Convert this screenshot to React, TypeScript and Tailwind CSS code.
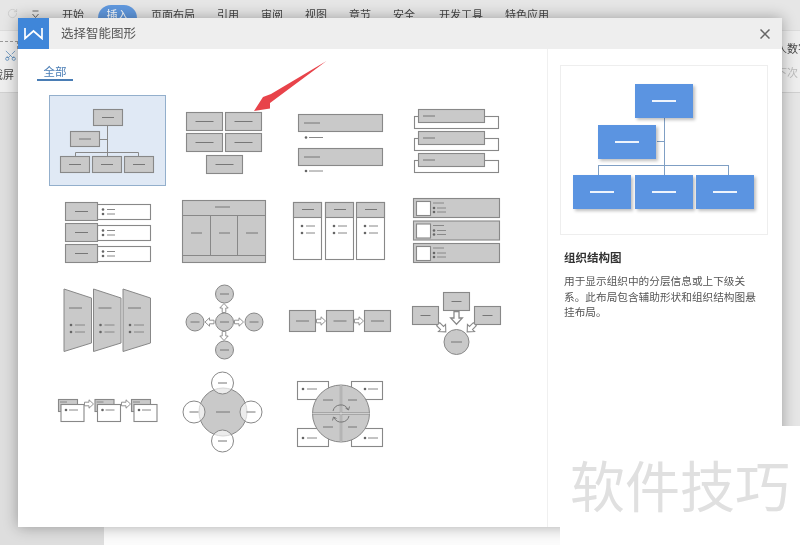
import React from "react";
import { RotateCw, Scissors } from "lucide-react";

const F = "#c9c9c9";
const S = "#888888";

const Dash = ({ a, b, y, c = "#777777" }: { a: number; b: number; y: number; c?: string }) => (
  <line x1={a} x2={b} y1={y} y2={y} stroke={c} strokeWidth={1} />
);
const Rect = ({ x, y, w, h, f = F }: { x: number; y: number; w: number; h: number; f?: string }) => (
  <rect x={x + 0.5} y={y + 0.5} width={w - 1} height={h - 1} fill={f} stroke={S} strokeWidth={1.1} />
);
const Box = ({ x, y, w, h, d = 12 }: { x: number; y: number; w: number; h: number; d?: number }) => (
  <g>
    <Rect x={x} y={y} w={w} h={h} />
    <Dash a={x + w / 2 - d / 2} b={x + w / 2 + d / 2} y={y + h / 2} />
  </g>
);
const Bullet = ({ x, y, a, b }: { x: number; y: number; a: number; b: number }) => (
  <g>
    <circle cx={x} cy={y} r={1.3} fill="#666" />
    <Dash a={a} b={b} y={y} c="#888" />
  </g>
);
const Circle = ({ x, y, r, f = F, o = 1, d = 9 }: { x: number; y: number; r: number; f?: string; o?: number; d?: number }) => (
  <g>
    <circle cx={x} cy={y} r={r} fill={f} fillOpacity={o} stroke={S} strokeWidth={1} />
    <Dash a={x - d / 2} b={x + d / 2} y={y} />
  </g>
);
const Arrow = ({ x, y, r = 0, s = 1 }: { x: number; y: number; r?: number; s?: number }) => (
  <polygon
    points="-4.5,-1.8 0,-1.8 0,-4.2 4.5,0 0,4.2 0,1.8 -4.5,1.8"
    transform={`translate(${x} ${y}) rotate(${r}) scale(${s})`}
    fill="#fff"
    stroke={S}
    strokeWidth={0.9}
  />
);

const cells: React.ReactNode[] = [
  // row 1
  <g key="a">
    <path d="M107.5 126V156M75.5 156V152.5H138.5V156M100 139.5H107.5" fill="none" stroke={S} strokeWidth={1} />
    <Box x={93} y={109} w={30} h={17} />
    <Box x={70} y={131} w={30} h={16} />
    <Box x={60} y={156} w={30} h={17} />
    <Box x={92} y={156} w={30} h={17} />
    <Box x={124} y={156} w={30} h={17} />
  </g>,
  <g key="b">
    <Box x={186} y={112} w={37} h={19} d={18} />
    <Box x={225} y={112} w={37} h={19} d={18} />
    <Box x={186} y={133} w={37} h={19} d={18} />
    <Box x={225} y={133} w={37} h={19} d={18} />
    <Box x={206} y={155} w={37} h={19} d={18} />
  </g>,
  <g key="c">
    <Rect x={298} y={114} w={85} h={18} />
    <Dash a={304} b={320} y={123} />
    <Bullet x={306} y={137.5} a={309} b={323} />
    <Rect x={298} y={148} w={85} h={18} />
    <Dash a={304} b={320} y={157} />
    <Bullet x={306} y={171} a={309} b={323} />
  </g>,
  <g key="d">
    {[0, 22, 44].map((o) => (
      <g key={o}>
        <Rect x={414} y={116 + o} w={85} h={13} f="#fff" />
        <Rect x={418} y={109 + o} w={67} h={14} />
        <Dash a={423} b={435} y={116 + o} />
      </g>
    ))}
  </g>,
  // row 2
  <g key="e">
    {[0, 21, 42].map((o) => (
      <g key={o}>
        <Rect x={97} y={204 + o} w={54} h={16} f="#fff" />
        <Box x={65} y={202 + o} w={33} h={19} d={13} />
        <Bullet x={103} y={209.5 + o} a={107} b={115} />
        <Bullet x={103} y={214 + o} a={107} b={115} />
      </g>
    ))}
  </g>,
  <g key="f">
    <Rect x={182} y={200} w={84} h={63} />
    <path d="M182.5 215.5H265.5M182.5 255.5H265.5M210.5 215.5V255.5M237.5 215.5V255.5" stroke={S} fill="none" />
    <Dash a={215} b={230} y={207} />
    <Dash a={191} b={202} y={233} />
    <Dash a={219} b={230} y={233} />
    <Dash a={246} b={258} y={233} />
  </g>,
  <g key="g">
    {[293, 325, 356].map((x) => (
      <g key={x}>
        <Rect x={x} y={202} w={29} h={58} f="#fff" />
        <Rect x={x} y={202} w={29} h={16} />
        <Dash a={x + 9} b={x + 21} y={209.5} />
        <Bullet x={x + 9} y={226} a={x + 13} b={x + 22} />
        <Bullet x={x + 9} y={233} a={x + 13} b={x + 22} />
      </g>
    ))}
  </g>,
  <g key="h">
    {[0, 22.5, 45].map((o) => (
      <g key={o}>
        <Rect x={413} y={198 + o} w={87} h={20} />
        <Rect x={416} y={201 + o} w={15} h={15} f="#fff" />
        <Dash a={433} b={444} y={203 + o} c="#888" />
        <Bullet x={434} y={208 + o} a={437} b={446} />
        <Bullet x={434} y={212 + o} a={437} b={446} />
      </g>
    ))}
  </g>,
  // row 3
  <g key="i">
    {[64, 93.5, 123].map((x) => (
      <g key={x}>
        <polygon points={`${x},289 ${x + 27.5},298 ${x + 27.5},343 ${x},351.5`} fill={F} stroke={S} />
        <Dash a={x + 5} b={x + 18} y={308} />
        <Bullet x={x + 7} y={325} a={x + 11} b={x + 21} />
        <Bullet x={x + 7} y={332} a={x + 11} b={x + 21} />
      </g>
    ))}
  </g>,
  <g key="j">
    <Circle x={224.5} y={294} r={9} />
    <Circle x={224.5} y={350} r={9} />
    <Circle x={195} y={322} r={9} />
    <Circle x={254} y={322} r={9} />
    <Circle x={224.5} y={322} r={9} />
    <Arrow x={224} y={308} r={-90} />
    <Arrow x={224} y={336} r={90} />
    <Arrow x={209.5} y={322} r={180} />
    <Arrow x={239} y={322} r={0} />
  </g>,
  <g key="k">
    <Box x={289} y={310} w={27} h={22} d={13} />
    <Box x={326} y={310} w={28} h={22} d={13} />
    <Box x={364} y={310} w={27} h={22} d={13} />
    <Arrow x={321} y={321} />
    <Arrow x={359} y={321} />
  </g>,
  <g key="l">
    <Box x={443} y={292} w={27} h={19} d={10} />
    <Box x={412} y={306} w={27} h={19} d={10} />
    <Box x={474} y={306} w={27} h={19} d={10} />
    <Circle x={456.5} y={342} r={12.5} d={11} />
    <Arrow x={456.5} y={318} r={90} s={1.4} />
    <Arrow x={442} y={328} r={45} s={1.2} />
    <Arrow x={471} y={328} r={135} s={1.2} />
  </g>,
  // row 4
  <g key="m">
    {[58, 94.5, 131].map((x) => (
      <g key={x}>
        <Rect x={x} y={399} w={20} h={13} />
        <Dash a={x + 2} b={x + 9} y={402} c="#888" />
        <Rect x={x + 2.5} y={404} w={24} h={18} f="#fff" />
        <Bullet x={x + 8} y={410} a={x + 11} b={x + 20} />
      </g>
    ))}
    <Arrow x={89} y={404} />
    <Arrow x={126} y={404} />
  </g>,
  <g key="n">
    <Circle x={223} y={412} r={24} d={14} />
    <Circle x={222.5} y={383} r={11} f="#fff" o={0.65} />
    <Circle x={222.5} y={441} r={11} f="#fff" o={0.65} />
    <Circle x={194} y={412} r={11} f="#fff" o={0.65} />
    <Circle x={251} y={412} r={11} f="#fff" o={0.65} />
  </g>,
  <g key="o">
    <Rect x={297} y={381} w={32} h={19} f="#fff" />
    <Rect x={351} y={381} w={32} h={19} f="#fff" />
    <Rect x={297} y={428} w={32} h={19} f="#fff" />
    <Rect x={351} y={428} w={32} h={19} f="#fff" />
    <Bullet x={303} y={389} a={307} b={317} />
    <Bullet x={365} y={389} a={368} b={378} />
    <Bullet x={303} y={438} a={307} b={317} />
    <Bullet x={365} y={438} a={368} b={378} />
    <circle cx={341} cy={413.5} r={28.5} fill={F} stroke={S} />
    <path d="M341 385V442M312.5 413.5H369.5" stroke="#9a9a9a" strokeWidth={2.4} />
    <path d="M341 385V442M312.5 413.5H369.5" stroke="#ddd" strokeWidth={0.8} />
    <Dash a={323} b={333} y={400} />
    <Dash a={348} b={357} y={400} />
    <Dash a={323} b={333} y={427} />
    <Dash a={348} b={357} y={427} />
    <path d="M333 411A8 8 0 0 1 348 409.5M349 416A8 8 0 0 1 334 417.5" fill="none" stroke="#777" />
    <path d="M345.5 408L348.5 410L349.5 406.5M336.5 418.5L333.5 417L332.5 420.5" fill="none" stroke="#777" />
  </g>,
];

const ORIGINS = cells.map((_, i) => ({ x: 49 + 117 * (i % 4), y: 95 + 91 * Math.floor(i / 4) }));

const Thumb = ({ i }: { i: number }) => (
  <div className={i === 0 ? "h-[91px] w-[117px] bg-[#e0e9f5] shadow-[inset_0_0_0_1px_#93afcc]" : "h-[91px] w-[117px]"}>
    <svg
      width={117}
      height={91}
      viewBox={`${ORIGINS[i].x} ${ORIGINS[i].y} 117 91`}
      className="block overflow-visible"
    >
      {cells[i]}
    </svg>
  </div>
);

const Tab = ({ t, extra = "" }: { t: string; extra?: string }) => (
  <span className={`px-[11px] text-[11px] leading-[18px] text-[#444] whitespace-nowrap ${extra}`}>{t}</span>
);

const PBox = ({ className }: { className: string }) => (
  <div className={`flex h-[34px] w-[58px] items-center justify-center bg-[#5b94e1] shadow-[2px_2px_3px_rgba(0,0,0,0.25)] ${className}`}>
    <div className="h-[2px] w-[24px] bg-[#eef4fc]" />
  </div>
);

export default function App() {
  return (
    <div className="relative flex h-[545px] w-[800px] flex-col overflow-hidden bg-white font-['Noto_Sans_CJK_SC',sans-serif] blur-[0.35px]">
      {/* Ribbon behind the dialog */}
      <div className="flex h-[31px] items-start border-b border-[#dcdcdc] bg-[#e6e6e6] pt-[5px]">
        <RotateCw size={11} strokeWidth={1.2} className="ml-[7px] mt-[3px] text-[#bbb]" />
        <svg width={10} height={9} viewBox="0 0 10 9" className="ml-[13px] mt-[5px]">
          <path d="M1.5 1H7.5M1.5 4L4.5 7.5L7.5 4" fill="none" stroke="#666" />
        </svg>
        <div className="w-[10px]" />
        <Tab t="开始" />
        <span className="ml-[3px] mr-[3px] h-[26px] w-[39px] rounded-full bg-[#6098de] text-center text-[11px] leading-[18px] text-white">插入</span>
        <Tab t="页面布局" />
        <Tab t="引用" />
        <Tab t="审阅" />
        <Tab t="视图" />
        <Tab t="章节" />
        <Tab t="安全" />
        <Tab t="开发工具" extra="ml-[2px]" />
        <Tab t="特色应用" />
      </div>
      <div className="flex h-[62px] justify-between border-b border-[#d0d0d0] bg-[#eeeeee]">
        <div className="w-[18px] overflow-hidden pt-[10px]">
          <div className="h-[8px] border-t border-r border-dashed border-[#999]" />
          <Scissors size={13} strokeWidth={1.2} className="ml-[4px] -rotate-90 text-[#3f78b0]" />
          <div className="-ml-[8px] mt-[5px] whitespace-nowrap text-[11px] leading-[14px] text-[#444]">截屏</div>
        </div>
        <div className="w-[18px] overflow-hidden pt-[10px]">
          <div className="-ml-[6px] whitespace-nowrap text-[11px] leading-[14px] text-[#444]">人数字</div>
          <div className="-ml-[6px] mt-[10px] whitespace-nowrap text-[11px] leading-[14px] text-[#bbb]">下次</div>
        </div>
      </div>
      <div className="flex flex-1">
        <div className="w-[104px] bg-[#dedede]" />
        <div className="flex-1 bg-[#fbfbfb]" />
        <div className="w-[18px] bg-[#e6e6e6]" />
      </div>

      {/* Dialog */}
      <div className="absolute left-[18px] top-[18px] flex h-[509px] w-[764px] flex-col bg-white shadow-[0_0_14px_rgba(0,0,0,0.32)]">
        <div className="flex h-[31px] shrink-0 items-center bg-[#eeeeee]">
          <div className="flex h-[31px] w-[31px] items-center justify-center bg-[#3f86d9]">
            <svg width={19} height={13} viewBox="0 0 19 13">
              <path d="M1 1V11.5L9.5 4L18 11.5V1" fill="none" stroke="#fff" strokeWidth={1.7} />
            </svg>
          </div>
          <span className="ml-[12px] text-[12.5px] text-[#555]">选择智能图形</span>
          <svg width={10} height={10} viewBox="0 0 10 10" className="ml-auto mr-[12px]">
            <path d="M0.5 0.5L9.5 9.5M9.5 0.5L0.5 9.5" stroke="#666" strokeWidth={1.5} />
          </svg>
        </div>
        <div className="flex flex-1">
          <div className="w-[530px] border-r border-[#f0f0f0]">
            <div className="ml-[19px] mt-[15px] h-[17px] w-[36px] border-b-2 border-[#4a7db5] text-center text-[11.5px] leading-[15px] text-[#4a7db5]">
              全部
            </div>
            <div className="ml-[31px] mt-[14px] grid grid-cols-[repeat(4,117px)] grid-rows-[repeat(4,91px)]">
              {cells.map((_, i) => (
                <Thumb key={i} i={i} />
              ))}
            </div>
          </div>
          <div className="flex-1 pl-[12px] pt-[16px]">
            <div className="h-[170px] w-[208px] border border-[#eeeeee] pl-[12px] pt-[18px]">
              <div className="relative h-[125px] w-[182px]">
                <div className="absolute left-[91px] top-[34px] h-[57px] w-px bg-[#7f9fc4]" />
                <div className="absolute left-[25px] top-[81px] h-[10px] w-[131px] border-x border-t border-[#7f9fc4]" />
                <div className="absolute left-[84px] top-[57px] h-px w-[8px] bg-[#7f9fc4]" />
                <PBox className="absolute left-[62px] top-0" />
                <PBox className="absolute left-[25px] top-[41px]" />
                <PBox className="absolute left-0 top-[91px]" />
                <PBox className="absolute left-[62px] top-[91px]" />
                <PBox className="absolute left-[123px] top-[91px]" />
              </div>
            </div>
            <div className="ml-[4px] mt-[14px] text-[11.5px] font-bold leading-[16px] text-[#333]">组织结构图</div>
            <p className="ml-[4px] mt-[8px] w-[196px] text-[10.67px] leading-[15.5px] text-[#555]">
              用于显示组织中的分层信息或上下级关系。此布局包含辅助形状和组织结构图悬挂布局。
            </p>
          </div>
        </div>
      </div>

      {/* Red annotation arrow */}
      <svg className="absolute left-[250px] top-[58px]" width={80} height={56} viewBox="250 58 80 56">
        <polygon points="326.5,61 271,94 263,97 254,111 270,108.5 270,103" fill="#e8434a" />
      </svg>

      {/* Watermark */}
      <div className="absolute bottom-0 right-0 flex h-[119px] w-[240px] items-center justify-center bg-white pb-[4px] text-[55px] leading-none text-[#e0e0e0]">
        软件技巧
      </div>
    </div>
  );
}
